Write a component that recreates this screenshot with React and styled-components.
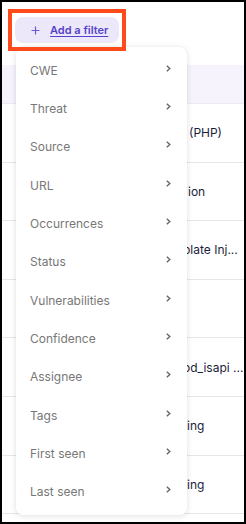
import React from 'react'
import styled, { createGlobalStyle } from 'styled-components'

const GlobalStyle = createGlobalStyle`
  html, body {
    margin: 0;
    padding: 0;
    background: #000;
  }
  body {
    font-family: Inter, "Noto Sans", "Liberation Sans", sans-serif;
  }
`

const Frame = styled.div`
  position: relative;
  margin: 2px;
  width: 242px;
  height: 520px;
  background: #fff;
  overflow: hidden;
`

const Toolbar = styled.div`
  display: flex;
  align-items: flex-start;
  height: 63px;
  padding: 15px 0 0 13px;
  box-sizing: border-box;
`

const FilterButton = styled.button`
  display: flex;
  align-items: center;
  gap: 10px;
  height: 26px;
  width: 104px;
  padding: 0 0 0 16px;
  box-sizing: border-box;
  border: none;
  border-radius: 8px;
  background: #ece8fa;
  color: #5443c9;
  font-family: inherit;
  font-size: 11px;
  font-weight: 600;
  cursor: pointer;

  span {
    text-decoration: underline;
    text-underline-offset: 2px;
  }
`

const Highlight = styled.div`
  position: absolute;
  left: 6px;
  top: 7px;
  width: 118px;
  height: 42px;
  box-sizing: border-box;
  border: 4px solid #ff4a1c;
  pointer-events: none;
`

const Table = styled.div`
  display: flex;
  flex-direction: column;
`

const HeaderRow = styled.div`
  height: 38px;
  background: #f6f3fd;
  border-bottom: 1px solid #ece9f3;
`

const Row = styled.div`
  display: flex;
  align-items: center;
  height: 57.6px;
  border-bottom: 1px solid #e6e6e6;
  padding-left: ${p => p.$x - 2}px;
  font-size: 12px;
  color: #1d1c3b;
  white-space: nowrap;
`

const Menu = styled.ul`
  position: absolute;
  left: 14px;
  top: 45px;
  width: 171px;
  margin: 0;
  padding: 4px 0;
  list-style: none;
  background: #fff;
  border-radius: 7px;
  box-shadow: 0 1px 6px rgba(0, 0, 0, 0.12), 0 0 1px rgba(0, 0, 0, 0.08);
`

const MenuItem = styled.li`
  display: flex;
  align-items: center;
  justify-content: space-between;
  height: 38.33px;
  padding: 0 16px 0 14px;
  font-size: 12px;
  color: #777;
  cursor: pointer;

  svg {
    margin-top: -4px;
  }
`

const Plus = () => (
  <svg width='9' height='9' viewBox='0 0 9 9'>
    <path d='M4.5 0.5v8M0.5 4.5h8' stroke='#6b5bd0' strokeWidth='1.2' fill='none' />
  </svg>
)

const Chevron = () => (
  <svg width='5' height='7' viewBox='0 0 5 7'>
    <path d='M0.8 0.8l3 2.7-3 2.7' stroke='#666' strokeWidth='1.4' fill='none' />
  </svg>
)

const filters = [
  'CWE', 'Threat', 'Source', 'URL', 'Occurrences', 'Status',
  'Vulnerabilities', 'Confidence', 'Assignee', 'Tags', 'First seen', 'Last seen'
]

// only the tail of each name shows past the open menu
const rows = [
  { name: '(PHP)', x: 189 },
  { name: 'ion', x: 188 },
  { name: 'plate Inj...', x: 183 },
  { name: '', x: 183 },
  { name: 'od_isapi ...', x: 183 },
  { name: 'ing', x: 187 },
  { name: 'ing', x: 187 }
]

const App = () => (
  <>
    <GlobalStyle />
    <Frame>
      <Toolbar>
        <FilterButton>
          <Plus />
          <span>Add a filter</span>
        </FilterButton>
      </Toolbar>
      <Table>
        <HeaderRow />
        {rows.map((r, i) => (
          <Row key={i} $x={r.x}>{r.name}</Row>
        ))}
      </Table>
      <Menu>
        {filters.map(f => (
          <MenuItem key={f}>
            {f}
            <Chevron />
          </MenuItem>
        ))}
      </Menu>
      <Highlight />
    </Frame>
  </>
)

export default App
